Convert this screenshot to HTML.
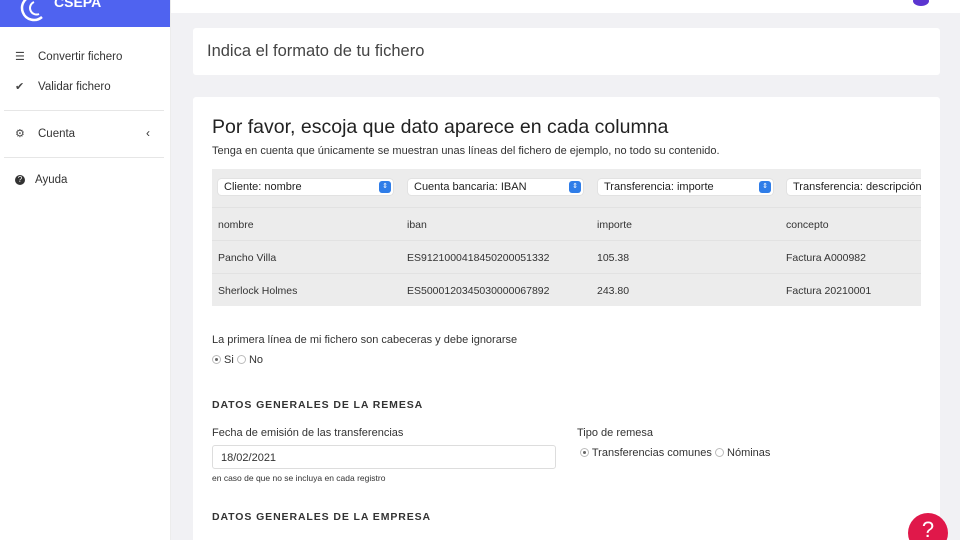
<!DOCTYPE html>
<html style="width:960px;height:540px;overflow:hidden"><head><meta charset="utf-8"><style>
*{box-sizing:border-box;margin:0;padding:0}
body{width:960px;height:540px;overflow:hidden;background:#f1f1f4;font-family:"Liberation Sans",sans-serif;color:#333;position:relative}
.side{position:absolute;left:0;top:0;width:171px;height:540px;background:#fff;border-right:1px solid #ececec}
.logo{height:27px;background:#4f63f0;color:#fff;font-weight:bold;font-size:14px;position:relative;overflow:hidden}
.logo span{position:absolute;left:54px;top:-6px}
.logo svg{position:absolute;left:20px;top:-8px}
.nav{position:absolute;left:15px;font-size:11.5px;color:#333;display:flex;align-items:center}
.nav i{display:inline-block;width:14px;margin-right:9px;font-style:normal;font-size:11px;color:#444}
.hr{position:absolute;left:4px;width:160px;height:1px;background:#e6e6e6}
.top{position:absolute;left:171px;top:0;width:789px;height:13px;background:#fff}
.card{position:absolute;left:193px;width:747px;background:#fff;border-radius:3px}
.t1{font-size:16.5px;color:#444;position:absolute;left:14px;top:14px}
h1{position:absolute;left:19px;top:19px;font-size:19.5px;font-weight:normal;color:#222}
.sub{position:absolute;left:19px;top:48px;font-size:11px;color:#333}
.tbl{position:absolute;left:19px;top:72px;width:709px;height:137px;background:#ececec;overflow:hidden}
.sel{position:absolute;top:10px;height:16px;width:175px;background:#fff;border-radius:3px;box-shadow:0 0 1px #aaa;font-size:11px;padding:2px 0 0 6px;color:#222;white-space:nowrap;overflow:hidden}
.sel b{position:absolute;right:2px;top:2px;width:12px;height:12px;background:#2f7de8;border-radius:3px;color:#fff;font-size:7px;line-height:12px;text-align:center;font-weight:normal}
.row{position:absolute;left:0;width:709px;height:33px;border-top:1px solid #e2e2e2;font-size:10.5px;color:#333}
.row span{position:absolute;top:11px}
.lbl{position:absolute;font-size:11px;color:#333}
.rad{display:inline-block;width:9px;height:9px;border:1px solid #bbb;border-radius:50%;vertical-align:-1px;position:relative}
.rad.on:after{content:"";position:absolute;left:2px;top:2px;width:3px;height:3px;border-radius:50%;background:#666}
.hd{position:absolute;left:19px;font-size:10.5px;font-weight:bold;letter-spacing:.9px;color:#333}
</style></head><body>
<div class="side">
 <div class="logo"><svg width="28" height="30" viewBox="0 0 28 30"><path d="M14 4a12 12 0 1 0 8 21" fill="none" stroke="#fff" stroke-width="2.5"/><path d="M14 10a6 6 0 1 0 5 12" fill="none" stroke="#fff" stroke-width="2"/></svg><span>CSEPA</span></div>
 <div class="nav" style="top:50px"><i>☰</i>Convertir fichero</div>
 <div class="nav" style="top:80px"><i>✔</i>Validar fichero</div>
 <div class="hr" style="top:110px"></div>
 <div class="nav" style="top:127px"><i>⚙</i>Cuenta</div>
 <div style="position:absolute;left:146px;top:126px;font-size:12px">‹</div>
 <div class="hr" style="top:157px"></div>
 <div class="nav" style="top:174px;left:15px"><i style="display:inline-block;width:10px;height:10px;border-radius:50%;background:#333;color:#fff;font-size:8px;text-align:center;line-height:10px;margin-right:10px">?</i>Ayuda</div>
</div>
<div class="top"><div style="position:absolute;left:742px;top:-4px;width:16px;height:10px;border-radius:50%;background:#5b35d0"></div></div>
<div class="card" style="top:28px;height:47px"><div class="t1">Indica el formato de tu fichero</div></div>
<div class="card" style="top:97px;height:443px;border-radius:3px 3px 0 0">
 <h1>Por favor, escoja que dato aparece en cada columna</h1>
 <div class="sub">Tenga en cuenta que únicamente se muestran unas líneas del fichero de ejemplo, no todo su contenido.</div>
 <div class="tbl">
  <div class="sel" style="left:6px">Cliente: nombre<b>⇕</b></div>
  <div class="sel" style="left:196px">Cuenta bancaria: IBAN<b>⇕</b></div>
  <div class="sel" style="left:386px">Transferencia: importe<b>⇕</b></div>
  <div class="sel" style="left:575px;width:150px">Transferencia: descripción</div>
  <div class="row" style="top:38px"><span style="left:6px">nombre</span><span style="left:195px">iban</span><span style="left:385px">importe</span><span style="left:574px">concepto</span></div>
  <div class="row" style="top:71px"><span style="left:6px">Pancho Villa</span><span style="left:195px">ES9121000418450200051332</span><span style="left:385px">105.38</span><span style="left:574px">Factura A000982</span></div>
  <div class="row" style="top:104px"><span style="left:6px">Sherlock Holmes</span><span style="left:195px">ES5000120345030000067892</span><span style="left:385px">243.80</span><span style="left:574px">Factura 20210001</span></div>
 </div>
 <div class="lbl" style="left:19px;top:237px">La primera línea de mi fichero son cabeceras y debe ignorarse</div>
 <div class="lbl" style="left:19px;top:257px"><span class="rad on"></span> Si <span class="rad"></span> No</div>
 <div class="hd" style="top:302px">DATOS GENERALES DE LA REMESA</div>
 <div class="lbl" style="left:19px;top:330px">Fecha de emisión de las transferencias</div>
 <div style="position:absolute;left:19px;top:348px;width:344px;height:24px;border:1px solid #ddd;border-radius:3px;font-size:11px;padding:6px 0 0 8px">18/02/2021</div>
 <div style="position:absolute;left:19px;top:376px;font-size:8.5px;color:#333">en caso de que no se incluya en cada registro</div>
 <div class="lbl" style="left:384px;top:330px">Tipo de remesa</div>
 <div class="lbl" style="left:387px;top:350px"><span class="rad on"></span> Transferencias comunes <span class="rad"></span> Nóminas</div>
 <div class="hd" style="top:414px">DATOS GENERALES DE LA EMPRESA</div>
</div>
<div style="position:absolute;left:908px;top:513px;width:40px;height:40px;border-radius:50%;background:#e0184a;color:#fff;font-size:22px;text-align:center;line-height:34px">?</div>
</body></html>
